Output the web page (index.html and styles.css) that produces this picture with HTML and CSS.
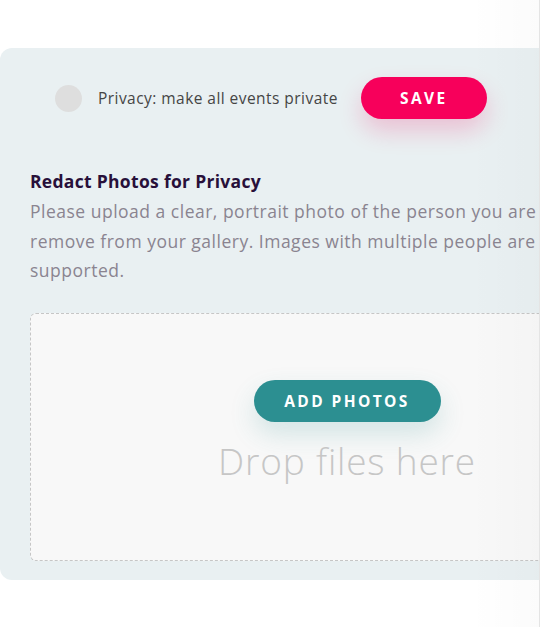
FILE: index.html
```html
<!DOCTYPE html>
<html lang="en">
<head>
  <meta charset="UTF-8" />
  <meta name="viewport" content="width=device-width, initial-scale=1.0"/>
  <title>Privacy settings</title>
  <link rel="stylesheet" href="styles.css">
</head>
<body>
  <div class="frame">
    <div class="panel">
      <div class="privacy-row">
        <div class="toggle"></div>
        <div class="privacy-label">Privacy: make all events private</div>
        <button class="btn btn-save">SAVE</button>
      </div>

      <div class="redact">
        <div class="redact-title">Redact Photos for Privacy</div>
        <p class="redact-text">Please upload a clear, portrait photo of the person you are<br>remove from your gallery. Images with multiple people are<br>supported.</p>
      </div>

      <div class="dropzone">
        <button class="btn btn-add">ADD PHOTOS</button>
        <div class="drop-hint">Drop files here</div>
      </div>
    </div>
  </div>
</body>
</html>
```

FILE: styles.css
```css
body {
  margin: 0;
  font-family: "Open Sans", Lato, sans-serif;
  background: #fff;
}

.frame {
  position: relative;
  width: 539px;
  height: 627px;
  overflow: hidden;
  border-right: 1px solid #e4e4e4;
}

/* soft shade on the right edge */
.frame::after {
  content: "";
  position: absolute;
  top: 0;
  right: 0;
  width: 70px;
  height: 100%;
  background: linear-gradient(to right, rgba(0,0,0,0), rgba(0,0,0,0.015));
  pointer-events: none;
}

.panel {
  margin-top: 48px;
  width: 720px;
  background-color: #e9f0f2;
  border-radius: 12px;
  padding: 29px 0 19px 30px;
  box-sizing: border-box;
}

.privacy-row {
  display: flex;
  align-items: center;
  padding-left: 25px;
}

.toggle {
  width: 27px;
  height: 27px;
  border-radius: 50%;
  background-color: #dedede;
}

.privacy-label {
  margin-left: 16px;
  font-size: 15.5px;
  letter-spacing: 0.45px;
  color: #454545;
}

.btn {
  border: none;
  color: white;
  font-family: "Open Sans", sans-serif;
  font-weight: 700;
  font-size: 15.5px;
  letter-spacing: 2.4px;
  border-radius: 21px;
  height: 42px;
  padding: 0;
  cursor: pointer;
}

.btn-save {
  margin-left: 23px;
  width: 126px;
  background-color: #f7005b;
  box-shadow: 0 12px 24px rgba(240, 0, 90, 0.2);
}

.redact {
  margin-top: 50px;
}

.redact-title {
  font-size: 17.5px;
  letter-spacing: 0.3px;
  line-height: 24px;
  font-weight: 700;
  color: #28103a;
}

.redact-text {
  margin: 4px 0 0;
  font-size: 17.5px;
  letter-spacing: 0.5px;
  line-height: 29.5px;
  color: #8a8490;
  white-space: nowrap;
}

.dropzone {
  margin-top: 27px;
  width: 634px;
  height: 248px;
  box-sizing: border-box;
  border: 1px dashed #c6c6c6;
  border-radius: 6px;
  background-color: #f8f8f8;
  display: flex;
  flex-direction: column;
  align-items: center;
  padding-top: 66px;
}

.btn-add {
  width: 187px;
  background-color: #2c8f91;
  box-shadow: 0 12px 26px rgba(44, 143, 145, 0.18);
}

.drop-hint {
  margin-top: 14px;
  font-size: 37px;
  letter-spacing: 0.8px;
  line-height: 50px;
  font-weight: 300;
  color: #c6c6c6;
}
```
